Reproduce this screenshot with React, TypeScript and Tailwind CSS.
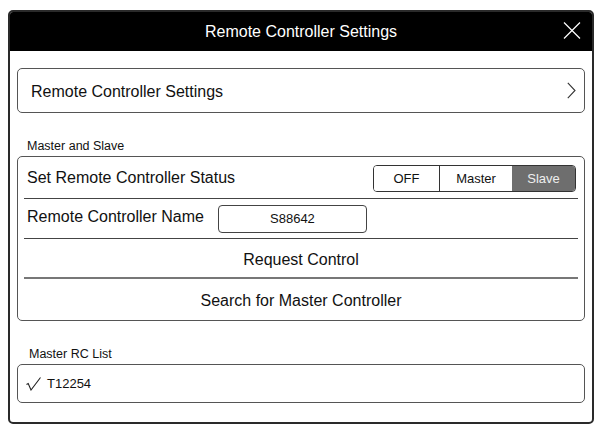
import React from "react";

const font = { fontFamily: '"Liberation Sans", Arial, sans-serif' };

function CloseIcon() {
  return (
    <svg width="18" height="17" viewBox="0 0 18 17" fill="none" stroke="#fff" strokeWidth="1.2">
      <path d="M1 0.5 L17 16.5 M17 0.5 L1 16.5" />
    </svg>
  );
}

function Chevron() {
  return (
    <svg width="9" height="17" viewBox="0 0 9 17" fill="none" stroke="#333" strokeWidth="1.1">
      <path d="M0.8 0.8 L8 8.5 L0.8 16.2" />
    </svg>
  );
}

function Check() {
  return (
    <svg width="15" height="14" viewBox="0 0 15 14" fill="none" stroke="#222" strokeWidth="1.1">
      <path d="M0.5 7.5 L2.2 6.6 L5 13 L14.5 0.5" />
    </svg>
  );
}

export default function App() {
  const segments = ["OFF", "Master", "Slave"];
  const active = "Slave";

  return (
    <div className="w-[601px] h-[431px] bg-white pt-[10px] pl-[8px] text-[#111]" style={font}>
      <div className="w-[586px] h-[414px] border-2 border-[#2a2a2a] rounded-[5px] overflow-hidden flex flex-col">
        {/* Header */}
        <div className="h-[39px] bg-black flex items-center justify-center relative">
          <span className="text-white text-[16px]">Remote Controller Settings</span>
          <div className="absolute right-[11px] top-[10px]">
            <CloseIcon />
          </div>
        </div>

        <div className="px-[7px] flex flex-col">
          {/* Settings link */}
          <div className="mt-[17px] h-[45px] border border-[#555] rounded-[5px] flex items-center justify-between pl-[13px] pr-[8px]">
            <span className="text-[16px] mt-[2px]">Remote Controller Settings</span>
            <Chevron />
          </div>

          {/* Master and Slave */}
          <div className="mt-[25px] pl-[10px] text-[12.5px] leading-[16px]">Master and Slave</div>
          <div className="mt-[2px] h-[165px] border border-[#555] rounded-[5px] px-[6px] flex flex-col">
            <div className="h-[42px] border-b border-[#444] flex items-center justify-between pl-[3px] pr-[2px]">
              <span className="text-[16px]">Set Remote Controller Status</span>
              <div className="flex h-[27px] border border-[#333] rounded-[4px] overflow-hidden text-[13px] mt-[1px]">
                {segments.map((s, i) => (
                  <div
                    key={s}
                    className={
                      "flex items-center justify-center " +
                      (i === 0 ? "w-[65px] " : i === 1 ? "w-[73px] border-l border-[#333] " : "w-[63px] ") +
                      (s === active ? "bg-[#6e6e6e] text-[#eee]" : "bg-white text-[#111]")
                    }
                  >
                    <span className="mt-[2px]">{s}</span>
                  </div>
                ))}
              </div>
            </div>
            <div className="h-[40px] border-b border-[#444] flex items-center pl-[3px] gap-[14px]">
              <span className="text-[16px] -mt-[3px]">Remote Controller Name</span>
              <div className="w-[149px] h-[28px] border border-[#444] rounded-[4px] flex items-center justify-center text-[13px] mt-[1px]">
                S88642
              </div>
            </div>
            <div className="h-[40px] border-b-2 border-[#777] flex items-center justify-center text-[16px] pt-[3px]">
              Request Control
            </div>
            <div className="flex-1 flex items-center justify-center text-[16px] pt-[2px]">
              Search for Master Controller
            </div>
          </div>

          {/* Master RC List */}
          <div className="mt-[25px] pl-[12px] text-[12.5px] leading-[16px]">Master RC List</div>
          <div className="mt-[2px] h-[39px] border border-[#555] rounded-[5px] flex items-center pl-[8px] text-[13px]">
            <span className="mr-[6px] mt-[1px]">
              <Check />
            </span>
            <span>T12254</span>
          </div>
        </div>
      </div>
    </div>
  );
}
